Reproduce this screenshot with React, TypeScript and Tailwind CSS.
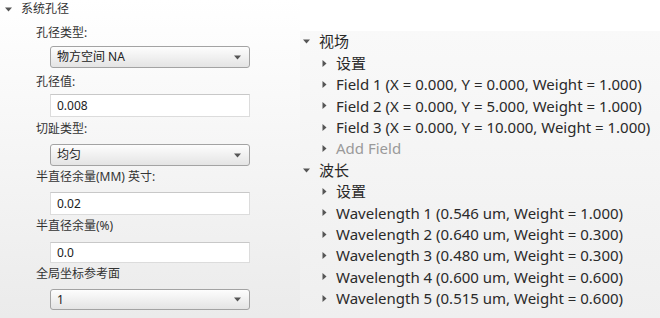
const font = { fontFamily: '"Noto Sans", "Noto Sans CJK SC", sans-serif' };

function DownTri({ className = "" }: { className?: string }) {
    return (
        <svg width="7" height="5" viewBox="0 0 7 5" className={className}>
            <path d="M0 0.5 L7 0.5 L3.5 4.5 Z" fill="#555" />
        </svg>
    );
}

function RightTri() {
    return (
        <svg width="5" height="7" viewBox="0 0 5 7">
            <path d="M0.5 0 L4.5 3.5 L0.5 7 Z" fill="#555" />
        </svg>
    );
}

function Label({ text, mt }: { text: string; mt: string }) {
    return <div className={`${mt} h-[18px] leading-[18px] pl-[36px] text-[12px] text-[#333]`}>{text}</div>;
}

function Combo({ value, mt, h }: { value: string; mt: string; h: string }) {
    return (
        <div
            className={`${mt} ${h} ml-[50px] w-[200px] flex items-center justify-between rounded-[3px] border border-[#a3a3a3] bg-gradient-to-b from-[#fdfdfd] to-[#e4e4e4] pl-[6px] pr-[8px] text-[12px] text-[#222]`}
        >
            <span>{value}</span>
            <DownTri />
        </div>
    );
}

function Field({ value, mt, h }: { value: string; mt: string; h: string }) {
    return (
        <div
            className={`${mt} ${h} ml-[50px] w-[200px] flex items-center border border-[#dcdcdc] border-t-[#c8c8c8] bg-white pl-[6px] text-[12px] text-[#222]`}
        >
            {value}
        </div>
    );
}

function TreeRow({ text, muted }: { text: string; muted?: boolean }) {
    return (
        <div className="h-[21.4px] shrink-0 flex items-center pl-[22px] gap-[9px] whitespace-nowrap">
            <RightTri />
            <span className={muted ? "text-[#9a9a9a]" : "text-[#2a2a2a]"}>{text}</span>
        </div>
    );
}

function TreeGroup({ title }: { title: string }) {
    return (
        <div className="h-[21.4px] shrink-0 flex items-center pl-[3px] gap-[9px]">
            <DownTri />
            <span className="text-[#2a2a2a]">{title}</span>
        </div>
    );
}

const fields = [
    "Field 1 (X = 0.000, Y = 0.000, Weight = 1.000)",
    "Field 2 (X = 0.000, Y = 5.000, Weight = 1.000)",
    "Field 3 (X = 0.000, Y = 10.000, Weight = 1.000)",
];

const waves = [
    "Wavelength 1 (0.546 um, Weight = 1.000)",
    "Wavelength 2 (0.640 um, Weight = 0.300)",
    "Wavelength 3 (0.480 um, Weight = 0.300)",
    "Wavelength 4 (0.600 um, Weight = 0.600)",
    "Wavelength 5 (0.515 um, Weight = 0.600)",
];

export default function App() {
    return (
        <div className="w-[660px] h-[318px] flex overflow-hidden" style={font}>
            {/* Left: aperture settings */}
            <div className="w-[300px] h-full flex flex-col bg-gradient-to-b from-white to-[#ebebeb]">
                <div className="h-[18px] flex items-center pl-[5px] gap-[9px] text-[12px] text-[#333]">
                    <DownTri />
                    <span>系统孔径</span>
                </div>
                <Label text="孔径类型:" mt="mt-[6px]" />
                <Combo value="物方空间 NA" mt="mt-[4px]" h="h-[22px]" />
                <Label text="孔径值:" mt="mt-[5px]" />
                <Field value="0.008" mt="mt-[3px]" h="h-[23px]" />
                <Label text="切趾类型:" mt="mt-[3px]" />
                <Combo value="均匀" mt="mt-[6px]" h="h-[22px]" />
                <Label text="半直径余量(MM) 英寸:" mt="mt-[2px]" />
                <Field value="0.02" mt="mt-[6px]" h="h-[23px]" />
                <Label text="半直径余量(%)" mt="mt-[2px]" />
                <Field value="0.0" mt="mt-[7px]" h="h-[21px]" />
                <Label text="全局坐标参考面" mt="mt-[2px]" />
                <Combo value="1" mt="mt-[6px]" h="h-[21px]" />
            </div>

            {/* Right: fields and wavelengths tree */}
            <div className="flex-1 h-full flex flex-col bg-white">
                <div className="h-[31px] shrink-0" />
                <div className="flex-1 flex flex-col text-[15px] bg-gradient-to-b from-[#f9f9f9] to-[#efefef] overflow-hidden">
                    <TreeGroup title="视场" />
                    <TreeRow text="设置" />
                    {fields.map((f) => (
                        <TreeRow key={f} text={f} />
                    ))}
                    <TreeRow text="Add Field" muted />
                    <TreeGroup title="波长" />
                    <TreeRow text="设置" />
                    {waves.map((w) => (
                        <TreeRow key={w} text={w} />
                    ))}
                </div>
            </div>
        </div>
    );
}
